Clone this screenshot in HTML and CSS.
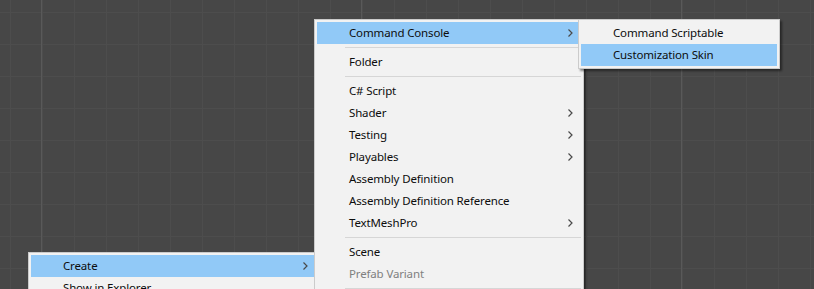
FILE: index.html
```html
<!DOCTYPE html>
<html lang="en">
<head>
  <meta charset="UTF-8">
  <title>Create Menu</title>
  <link rel="stylesheet" href="styles.css">
</head>
<body>
  <div class="scene">

    <div class="menu menu-root">
      <div class="item active">
        <span>Create</span>
        <svg class="chevron" width="5" height="8" viewBox="0 0 5 8"><polyline points="0.5,0.5 4,4 0.5,7.5"/></svg>
      </div>
      <div class="item"><span>Show in Explorer</span></div>
    </div>

    <div class="menu menu-create">
      <div class="item active">
        <span>Command Console</span>
        <svg class="chevron" width="5" height="8" viewBox="0 0 5 8"><polyline points="0.5,0.5 4,4 0.5,7.5"/></svg>
      </div>
      <div class="separator"></div>
      <div class="item"><span>Folder</span></div>
      <div class="separator"></div>
      <div class="item"><span>C# Script</span></div>
      <div class="item">
        <span>Shader</span>
        <svg class="chevron" width="5" height="8" viewBox="0 0 5 8"><polyline points="0.5,0.5 4,4 0.5,7.5"/></svg>
      </div>
      <div class="item">
        <span>Testing</span>
        <svg class="chevron" width="5" height="8" viewBox="0 0 5 8"><polyline points="0.5,0.5 4,4 0.5,7.5"/></svg>
      </div>
      <div class="item">
        <span>Playables</span>
        <svg class="chevron" width="5" height="8" viewBox="0 0 5 8"><polyline points="0.5,0.5 4,4 0.5,7.5"/></svg>
      </div>
      <div class="item"><span>Assembly Definition</span></div>
      <div class="item"><span>Assembly Definition Reference</span></div>
      <div class="item">
        <span>TextMeshPro</span>
        <svg class="chevron" width="5" height="8" viewBox="0 0 5 8"><polyline points="0.5,0.5 4,4 0.5,7.5"/></svg>
      </div>
      <div class="separator"></div>
      <div class="item"><span>Scene</span></div>
      <div class="item disabled"><span>Prefab Variant</span></div>
      <div class="separator"></div>
    </div>

    <div class="menu menu-console">
      <div class="item"><span>Command Scriptable</span></div>
      <div class="item active"><span>Customization Skin</span></div>
    </div>

  </div>
</body>
</html>
```

FILE: styles.css
```css
body {
  margin: 0;
  overflow: hidden;
  font-family: 'Noto Sans', 'Open Sans', sans-serif;
  font-size: 11.5px;
  letter-spacing: -0.15px;
  color: #0d0d0d;
}

.scene {
  position: relative;
  width: 814px;
  height: 289px;
  overflow: hidden;
  background-color: #474747;
  background-image:
    linear-gradient(to right, #595959 1px, transparent 1px),
    linear-gradient(to right, #4d4d4d 1px, transparent 1px),
    linear-gradient(to bottom, #4d4d4d 1px, transparent 1px);
  background-size: 320px 100%, 32px 100%, 100% 32px;
  background-position: 41px 0, 10px 0, 0 12px;
}

.menu {
  position: absolute;
  box-sizing: border-box;
  background: #f2f2f2;
  border: 1px solid #cbcbcb;
  padding: 2px;
  box-shadow: 2px 2px 2px rgba(0, 0, 0, 0.45);
}

.menu-root {
  left: 28px;
  top: 252px;
  width: 291px;
}

.menu-create {
  left: 314px;
  top: 19px;
  width: 270px;
}

.menu-console {
  left: 578px;
  top: 19px;
  width: 202px;
}

.item {
  display: flex;
  align-items: center;
  justify-content: space-between;
  height: 22px;
  padding: 0 8px 1px 32px;
  box-sizing: border-box;
  white-space: nowrap;
}

.item.active {
  background: #91c9f7;
}

.item.disabled {
  color: #808080;
}

.chevron {
  fill: none;
  stroke: #4a4a4a;
  stroke-width: 1.2;
}

.separator {
  height: 1px;
  margin: 3px 0 3px 28px;
  background: #d6d6d6;
}
```
